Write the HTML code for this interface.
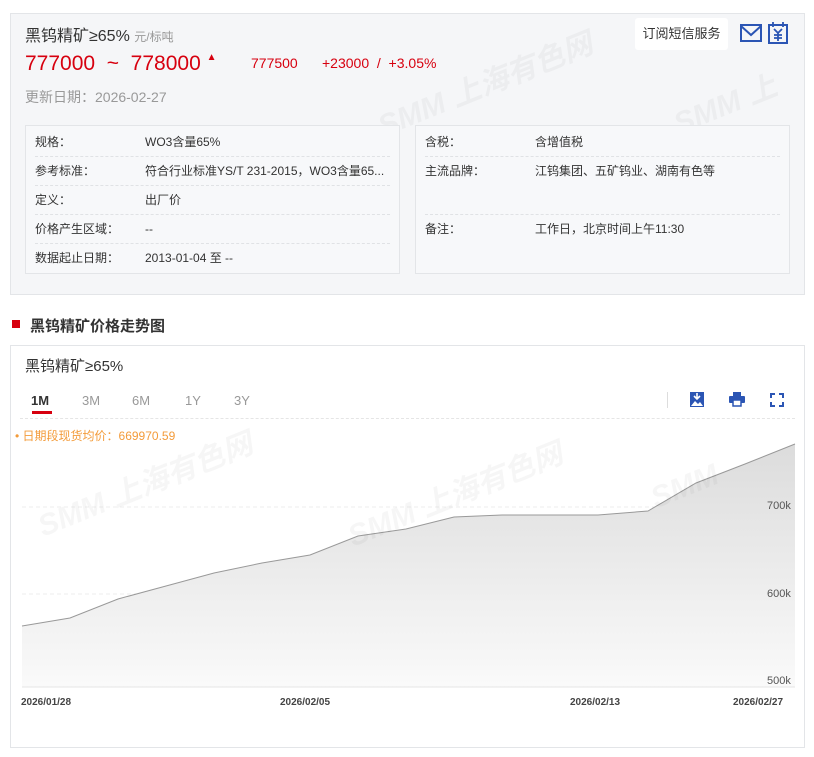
<!DOCTYPE html>
<html><head><meta charset="utf-8"><style>
*{margin:0;padding:0;box-sizing:border-box}
body{width:814px;height:757px;background:#fff;font-family:"Liberation Sans","Noto Sans CJK SC",sans-serif;position:relative;overflow:hidden;color:#333}
.abs{position:absolute;white-space:nowrap}
.panel{position:absolute;left:10px;top:13px;width:795px;height:282px;background:#f5f6f8;border:1px solid #e3e5e8}
.box{position:absolute;top:125px;height:149px;border:1px solid #e3e5e8;background:#f7f8fa}
.row{position:absolute;left:9px;right:9px;height:29px;border-bottom:1px dashed #e0e2e5;font-size:12px;line-height:29px;color:#333}
.row span{position:absolute;left:110px}
.wm{position:absolute;color:rgba(0,0,0,0.035);font-weight:bold;font-style:italic;font-size:30px;transform:rotate(-22deg);white-space:nowrap}
</style></head><body>
<div class="panel"></div>
<div class="wm" style="left:370px;top:60px">SMM 上海有色网</div>
<div class="wm" style="left:670px;top:80px">SMM 上</div>
<div class="abs" style="left:25px;top:22px;font-size:16px;color:#333">黑钨精矿≥65% <span style="font-size:12px;color:#999">元/标吨</span></div>
<div class="abs" style="left:25px;top:52px;font-size:21px;color:#d7000f">777000&nbsp;&nbsp;~&nbsp;&nbsp;778000 <span style="font-size:10px;vertical-align:top">▲</span></div>
<div class="abs" style="left:251px;top:55px;font-size:14px;color:#d7000f">777500</div>
<div class="abs" style="left:322px;top:55px;font-size:14px;color:#d7000f">+23000&nbsp;&nbsp;/&nbsp;&nbsp;+3.05%</div>
<div class="abs" style="left:25px;top:87px;font-size:14px;color:#999">更新日期：2026-02-27</div>
<div class="abs" style="left:635px;top:18px;width:93px;height:32px;background:#fff;border-radius:3px;font-size:13px;line-height:32px;text-align:center;color:#333">订阅短信服务</div>
<svg class="abs" style="left:740px;top:24px" width="22" height="18" viewBox="0 0 22 18"><rect x="1" y="1" width="20" height="16" fill="none" stroke="#2b55b4" stroke-width="2"/><path d="M1 2 L11 11 L21 2" fill="none" stroke="#2b55b4" stroke-width="2"/></svg>
<svg class="abs" style="left:768px;top:22px" width="20" height="22" viewBox="0 0 20 22"><rect x="1" y="3" width="18" height="18" fill="none" stroke="#2b55b4" stroke-width="2"/><path d="M5 0v5M15 0v5M6 7l4 4 4-4M10 11v8M6 13h8M6 16h8" fill="none" stroke="#2b55b4" stroke-width="1.8"/></svg>
<div class="box" style="left:25px;width:375px">
<div class="row" style="top:2px">规格：<span>WO3含量65%</span></div>
<div class="row" style="top:31px">参考标准：<span>符合行业标准YS/T 231-2015，WO3含量65...</span></div>
<div class="row" style="top:60px">定义：<span>出厂价</span></div>
<div class="row" style="top:89px">价格产生区域：<span>--</span></div>
<div class="row" style="top:118px;border:none">数据起止日期：<span>2013-01-04 至 --</span></div>
</div>
<div class="box" style="left:415px;width:375px">
<div class="row" style="top:2px">含税：<span>含增值税</span></div>
<div class="row" style="top:31px;height:58px;line-height:29px">主流品牌：<span>江钨集团、五矿钨业、湖南有色等</span></div>
<div class="row" style="top:89px;border:none">备注：<span>工作日，北京时间上午11:30</span></div>
</div>
<div class="abs" style="left:12px;top:320px;width:8px;height:8px;background:#d7000f"></div>
<div class="abs" style="left:30px;top:315px;font-size:15px;font-weight:bold;color:#333">黑钨精矿价格走势图</div>
<div class="abs" style="left:10px;top:345px;width:795px;height:403px;border:1px solid #e3e5e8;background:#fff"></div>
<div class="abs" style="left:25px;top:355px;font-size:15px;color:#333">黑钨精矿≥65%</div>
<div class="abs" style="left:31px;top:393px;font-size:13px;font-weight:bold;color:#333">1M</div>
<div class="abs" style="left:32px;top:411px;width:20px;height:3px;background:#d7000f"></div>
<div class="abs" style="left:82px;top:393px;font-size:13px;color:#999">3M</div>
<div class="abs" style="left:132px;top:393px;font-size:13px;color:#999">6M</div>
<div class="abs" style="left:185px;top:393px;font-size:13px;color:#999">1Y</div>
<div class="abs" style="left:234px;top:393px;font-size:13px;color:#999">3Y</div>
<div class="abs" style="left:667px;top:392px;width:1px;height:16px;background:#ddd"></div>
<svg class="abs" style="left:690px;top:392px" width="14" height="15" viewBox="0 0 14 15"><rect x="0" y="0" width="14" height="15" fill="#2b55b4"/><path d="M7 1v6M4 4l3 3 3-3" stroke="#fff" stroke-width="1.6" fill="none"/><path d="M1 14l4-5 3 3 2-2 3 4z" fill="#fff"/></svg>
<svg class="abs" style="left:729px;top:392px" width="16" height="15" viewBox="0 0 16 15"><rect x="4" y="0" width="8" height="4" fill="#2b55b4"/><rect x="0" y="4" width="16" height="7" rx="1" fill="#2b55b4"/><rect x="4" y="8" width="8" height="6" fill="#fff" stroke="#2b55b4" stroke-width="1.5"/></svg>
<svg class="abs" style="left:770px;top:393px" width="14" height="14" viewBox="0 0 14 14"><path d="M1 5V1h4M9 1h4v4M13 9v4H9M5 13H1V9" fill="none" stroke="#2b55b4" stroke-width="2"/></svg>
<div class="abs" style="left:20px;top:418px;width:775px;border-top:1px dashed #e5e5e5"></div>
<div class="abs" style="left:15px;top:427px;font-size:12px;color:#f39b3a">• 日期段现货均价：669970.59</div>
<svg class="abs" style="left:0;top:420px" width="814" height="300">
<defs><linearGradient id="g" x1="0" y1="0" x2="0" y2="1"><stop offset="0" stop-color="#dcdcdc"/><stop offset="1" stop-color="#fafafa"/></linearGradient></defs>
<line x1="22" y1="87" x2="795" y2="87" stroke="#eee" stroke-dasharray="4,3"/>
<line x1="22" y1="174" x2="795" y2="174" stroke="#eee" stroke-dasharray="4,3"/>
<path d="M22 206 L70 198 L118 179 L166 166 L214 153 L262 143 L310 135 L358 116 L406 109 L454 97 L502 95 L550 95 L598 95 L648 91 L696 63 L745 44 L795 24 L795 267 L22 267Z" fill="url(#g)"/>
<path d="M22 206 L70 198 L118 179 L166 166 L214 153 L262 143 L310 135 L358 116 L406 109 L454 97 L502 95 L550 95 L598 95 L648 91 L696 63 L745 44 L795 24" fill="none" stroke="#999" stroke-width="1"/>
<line x1="22" y1="267" x2="795" y2="267" stroke="#e5e5e5"/>
</svg>
<div class="wm" style="left:30px;top:460px">SMM 上海有色网</div>
<div class="wm" style="left:340px;top:470px">SMM 上海有色网</div>
<div class="wm" style="left:650px;top:470px">SMM</div>
<div class="abs" style="left:767px;top:500px;font-size:11px;color:#555">700k</div>
<div class="abs" style="left:767px;top:588px;font-size:11px;color:#555">600k</div>
<div class="abs" style="left:767px;top:675px;font-size:11px;color:#555">500k</div>
<div class="abs" style="left:21px;top:697px;font-size:10px;color:#444;font-weight:bold">2026/01/28</div>
<div class="abs" style="left:280px;top:697px;font-size:10px;color:#444;font-weight:bold">2026/02/05</div>
<div class="abs" style="left:570px;top:697px;font-size:10px;color:#444;font-weight:bold">2026/02/13</div>
<div class="abs" style="left:733px;top:697px;font-size:10px;color:#444;font-weight:bold">2026/02/27</div>
</body></html>
